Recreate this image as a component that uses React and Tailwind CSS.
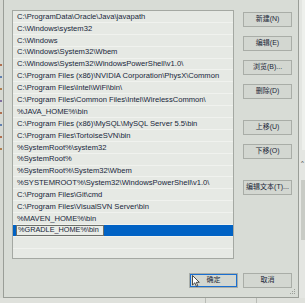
const paths = [
  'C:\\ProgramData\\Oracle\\Java\\javapath',
  'C:\\Windows\\system32',
  'C:\\Windows',
  'C:\\Windows\\System32\\Wbem',
  'C:\\Windows\\System32\\WindowsPowerShell\\v1.0\\',
  'C:\\Program Files (x86)\\NVIDIA Corporation\\PhysX\\Common',
  'C:\\Program Files\\Intel\\WiFi\\bin\\',
  'C:\\Program Files\\Common Files\\Intel\\WirelessCommon\\',
  '%JAVA_HOME%\\bin',
  'C:\\Program Files (x86)\\MySQL\\MySQL Server 5.5\\bin',
  'C:\\Program Files\\TortoiseSVN\\bin',
  '%SystemRoot%\\system32',
  '%SystemRoot%',
  '%SystemRoot%\\System32\\Wbem',
  '%SYSTEMROOT%\\System32\\WindowsPowerShell\\v1.0\\',
  'C:\\Program Files\\Git\\cmd',
  'C:\\Program Files\\VisualSVN Server\\bin',
  '%MAVEN_HOME%\\bin',
];

function Btn({ label, className = '' }) {
  return (
    <div
      className={`w-[49px] h-[15px] flex items-center justify-center border border-[#a9ada7] bg-[#d3d7d1] text-[7px] text-[#1c2838] ${className}`}
    >
      {label}
    </div>
  );
}

export default function App() {
  return (
    <div
      className="w-[305px] h-[303px] overflow-hidden bg-[#c9ccc6] flex flex-col"
      style={{ fontFamily: '"Liberation Sans", "Noto Sans CJK SC", sans-serif' }}
    >
      <div className="flex h-[298px]">
        {/* window behind, left */}
        <div className="w-[3px] flex flex-col gap-[10px] pt-[64px] bg-[#d6d9d3]">
          <div className="h-[2px] w-[2px] bg-[#b07050]" />
          <div className="h-[2px] w-[2px] bg-[#6080b0]" />
          <div className="h-[2px] w-[2px] bg-[#b08050]" />
          <div className="h-[2px] w-[2px] bg-[#8070a0]" />
          <div className="h-[2px] w-[2px] bg-[#b07050]" />
          <div className="h-[2px] w-[2px] bg-[#6080b0]" />
          <div className="h-[2px] w-[2px] bg-[#b07050]" />
          <div className="h-[2px] w-[2px] bg-[#b08050]" />
        </div>

        {/* dialog */}
        <div className="w-[296px] h-[298px] bg-[#d8dcd6] border-l border-r border-b border-[#9a9e98] relative flex flex-col">
          <div className="flex">
            {/* list */}
            <div className="ml-[8px] mt-[10px] w-[222px] h-[249px] border border-[#a4a8a2] bg-[#e6e9e4] overflow-hidden text-[7.6px] text-[#17263a]">
              {paths.map((p) => (
                <div key={p} className="h-[11.9px] border-b border-[#f0f2ee] pl-[4px] flex items-center whitespace-nowrap">
                  {p}
                </div>
              ))}
              <div className="h-[11.9px] border-b border-[#f0f2ee] flex items-center bg-[#0062c4]">
                <div className="ml-[3px] w-[88px] h-[11px] border border-[#6c6f6a] bg-[#e9ece7] flex items-center pl-[1px] whitespace-nowrap overflow-hidden text-[7.3px]">
                  %GRADLE_HOME%\bin
                </div>
              </div>
              <div className="h-[11.9px] border-b border-[#f0f2ee]" />
            </div>

            {/* buttons */}
            <div className="ml-[9px] mt-[12px] flex flex-col">
              <Btn label="新建(N)" />
              <Btn label="编辑(E)" className="mt-[9px]" />
              <Btn label="浏览(B)..." className="mt-[9px]" />
              <Btn label="删除(D)" className="mt-[9px]" />
              <Btn label="上移(U)" className="mt-[21px]" />
              <Btn label="下移(O)" className="mt-[9px]" />
              <Btn label="编辑文本(T)..." className="mt-[21px]" />
            </div>
          </div>

          <div className="mt-[14px] flex justify-end gap-[5px] pr-[6px]">
            <div className="relative">
              <Btn label="确定" className="w-[48px] border-[#1a6fd0] ring-1 ring-inset ring-[#1a6fd0]" />
              <svg className="absolute left-[3px] top-[2px]" width="8" height="12" viewBox="0 0 8 12">
                <path d="M0.5 0.5 L0.5 10 L2.8 7.8 L4.4 11.3 L5.8 10.7 L4.3 7.3 L7.3 7.3 Z" fill="#fff" stroke="#222" strokeWidth="0.8" />
              </svg>
            </div>
            <Btn label="取消" />
          </div>

          {/* resize grip */}
          <svg className="absolute right-[2px] bottom-[2px]" width="6" height="6" viewBox="0 0 6 6">
            <rect x="4" y="0" width="1" height="1" fill="#9a9e98" />
            <rect x="2" y="2" width="1" height="1" fill="#9a9e98" />
            <rect x="4" y="2" width="1" height="1" fill="#9a9e98" />
            <rect x="0" y="4" width="1" height="1" fill="#9a9e98" />
            <rect x="2" y="4" width="1" height="1" fill="#9a9e98" />
            <rect x="4" y="4" width="1" height="1" fill="#9a9e98" />
          </svg>
        </div>

        {/* window behind, right */}
        <div className="flex-1 bg-[#e4e6e2] flex flex-col items-end">
          <div className="w-[3px] h-[150px] bg-[#eef0ec]" />
          <div className="w-[4px] text-[6px] text-[#333] leading-none mt-[10px]">^</div>
          <div className="w-[4px] h-[60px] bg-[#c8cbc5] mt-[14px]" />
        </div>
      </div>

      {/* window behind, bottom */}
      <div className="flex-1 flex bg-[#dfe1dc]">
        <div className="ml-[205px] w-px bg-[#b8bbb5]" />
        <div className="ml-[50px] w-px bg-[#b8bbb5]" />
      </div>
    </div>
  );
}
